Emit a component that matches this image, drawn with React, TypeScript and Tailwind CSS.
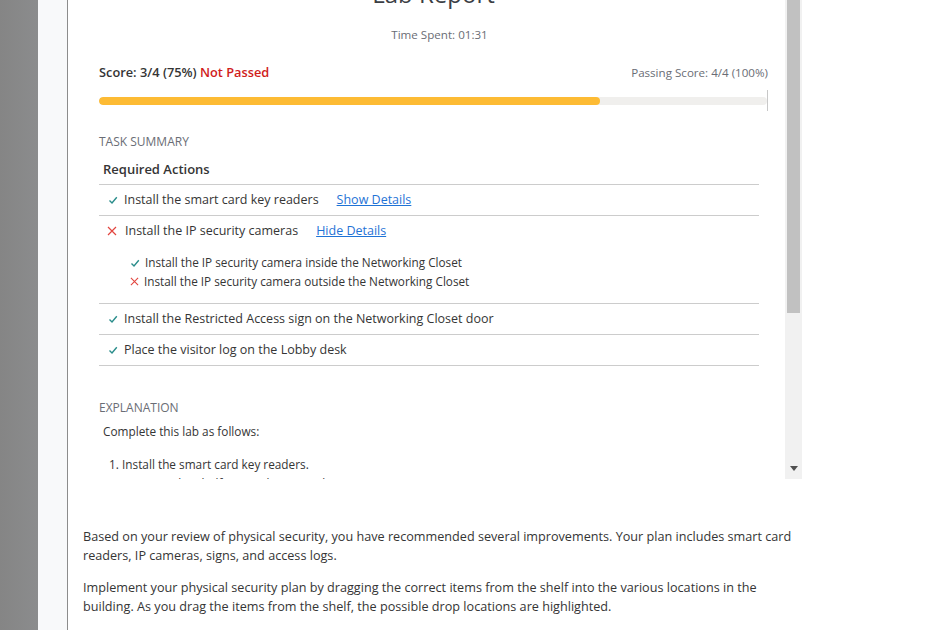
import React from 'react'

const Check = ({ size = 10 }: { size?: number }) => (
  <svg width={size} height={size} viewBox="0 0 10 10" className="shrink-0">
    <path d="M1.5 5.5 L4 8 L8.8 2.2" fill="none" stroke="#2a8d8b" strokeWidth="1.4" />
  </svg>
)

const Cross = ({ size = 10 }: { size?: number }) => (
  <svg width={size} height={size} viewBox="0 0 10 10" className="shrink-0">
    <path d="M1 1 L9 9 M9 1 L1 9" fill="none" stroke="#e2453f" strokeWidth="1.2" />
  </svg>
)

const TaskRow = ({ ok, text, link }: { ok: boolean; text: string; link?: string }) => (
  <div className="flex h-[30px] items-center">
    <span className={ok ? 'ml-[9px] mr-[6px]' : 'ml-[8px] mr-[8px]'}>{ok ? <Check /> : <Cross />}</span>
    <span>{text}</span>
    {link && <a className="ml-[18px] text-[#1f73d6] underline">{link}</a>}
  </div>
)

const App = () => {
  return (
    <div className="flex h-[630px] w-[926px] overflow-hidden bg-white font-['Open_Sans',sans-serif] text-[#353535]">
      {/* left rails */}
      <div className="w-[38px] bg-gradient-to-r from-[#858585] to-[#8b8c8d]" />
      <div className="w-[29px] bg-[#f8f9fa]" />
      <div className="w-px bg-[#8c8c8c]" />

      <div className="flex flex-1 flex-col">
        {/* report panel */}
        <div className="flex h-[479px] w-[734px]">
          <div className="flex-1 overflow-hidden">
            <div className="-mt-[22px] pl-[31px] pr-[17px]">
              <h1 className="h-[32px] text-center text-[24px] leading-[32px] text-[#3b3e44]">Lab Report</h1>
              <p className="mt-[17px] pl-[12px] text-center text-[11.6px] leading-[16px] text-[#6a6d75]">Time Spent: 01:31</p>

              <div className="mt-[20px] flex h-[20px] items-center justify-between text-[11.6px]">
                <p className="text-[12.8px] font-semibold">
                  Score: 3/4 (75%) <span className="text-[#d0201b]">Not Passed</span>
                </p>
                <p className="text-[#6a6d75]">Passing Score: 4/4 (100%)</p>
              </div>

              <div className="mt-[7px] flex h-[21px] items-center">
                <div className="flex h-[8px] flex-1 overflow-hidden rounded-full bg-[#f0efed]">
                  <div className="h-full w-[75%] rounded-full bg-[#fdbb34]" />
                </div>
                <div className="h-full w-px bg-[#c8c8c8]" />
              </div>

              <p className="mt-[23px] text-[12px] font-medium leading-[16px] text-[#6a6d75]">TASK SUMMARY</p>

              <div className="mr-[9px] text-[12.5px]">
                <div className="flex h-[35px] items-center border-b border-[#cccccc] pl-[4px] pt-[5px] text-[13px] font-semibold">
                  Required Actions
                </div>
                <div className="border-b border-[#cccccc]">
                  <TaskRow ok text="Install the smart card key readers" link="Show Details" />
                </div>
                <div className="border-b border-[#cccccc] pb-[12px]">
                  <TaskRow ok={false} text="Install the IP security cameras" link="Hide Details" />
                  <div className="mt-[7px] flex flex-col pl-[31px] text-[11.75px] leading-[19px]">
                    <div className="flex items-center gap-[5px]">
                      <Check size={10} />
                      <span>Install the IP security camera inside the Networking Closet</span>
                    </div>
                    <div className="flex items-center gap-[5px]">
                      <Cross size={9} />
                      <span>Install the IP security camera outside the Networking Closet</span>
                    </div>
                  </div>
                </div>
                <div className="border-b border-[#cccccc]">
                  <TaskRow ok text="Install the Restricted Access sign on the Networking Closet door" />
                </div>
                <div className="border-b border-[#cccccc]">
                  <TaskRow ok text="Place the visitor log on the Lobby desk" />
                </div>
              </div>

              <p className="mt-[34px] text-[12px] font-medium leading-[16px] text-[#6a6d75]">EXPLANATION</p>
              <p className="mt-[7px] pl-[4px] text-[11.8px] leading-[16px]">Complete this lab as follows:</p>
              <ol className="mt-[16px] list-decimal pl-[23px] text-[11.8px] leading-[19px]">
                <li>
                  Install the smart card key readers.
                  <ul className="list-disc pl-[20px]">
                    <li>From the Shelf, expand Door Lock.</li>
                  </ul>
                </li>
              </ol>
            </div>
          </div>

          {/* scrollbar */}
          <div className="flex w-[17px] flex-col bg-[#f1f1f1]">
            <div className="mx-[2px] h-[313px] bg-[#c1c1c1]" />
            <div className="flex flex-1 items-end justify-center pb-[8px]">
              <svg width="8" height="5" viewBox="0 0 8 5">
                <path d="M0 0 H8 L4 5 Z" fill="#505050" />
              </svg>
            </div>
          </div>
        </div>

        {/* intro text */}
        <div className="w-[730px] pl-[15px] pt-[48px] text-[12.65px] leading-[19px] text-[#353535]">
          <p>
            Based on your review of physical security, you have recommended several improvements. Your plan includes smart card
            readers, IP cameras, signs, and access logs.
          </p>
          <p className="mt-[13px]">
            Implement your physical security plan by dragging the correct items from the shelf into the various locations in the
            building. As you drag the items from the shelf, the possible drop locations are highlighted.
          </p>
        </div>
      </div>
    </div>
  )
}

export default App
